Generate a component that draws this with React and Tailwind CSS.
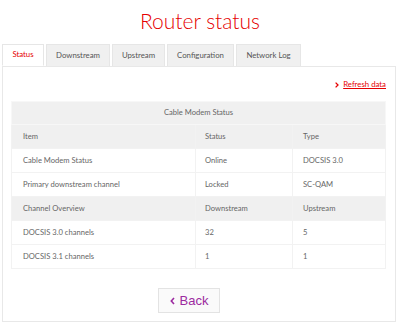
export default function App() {
  const tabs = ['Status', 'Downstream', 'Upstream', 'Configuration', 'Network Log'];
  const tabW = ['w-[42px]', 'w-[64px]', 'w-[53px]', 'w-[67px]', 'w-[65px]'];
  const rows = [
    { cells: ['Item', 'Status', 'Type'], head: true },
    { cells: ['Cable Modem Status', 'Online', 'DOCSIS 3.0'] },
    { cells: ['Primary downstream channel', 'Locked', 'SC-QAM'] },
    { cells: ['Channel Overview', 'Downstream', 'Upstream'], head: true },
    { cells: ['DOCSIS 3.0 channels', '32', '5'] },
    { cells: ['DOCSIS 3.1 channels', '1', '1'] },
  ];
  return (
    <div className="w-[400px] h-[331px] bg-white font-['Lato',sans-serif] text-[#333]">
      <h1 className="pt-[8px] h-[44px] text-center text-[21px] leading-[26px] font-light text-[#e60000]">
        Router status
      </h1>
      <div className="flex gap-[2px] pl-[2px]">
        {tabs.map((t, i) => (
          <div
            key={t}
            className={`${tabW[i]} h-[22px] flex items-center justify-center text-[7.8px] border border-[#e6e6e6] ${
              i === 0 ? 'bg-white text-[#e60000] border-b-white -mb-px z-10' : 'bg-[#f0f0f0] text-[#555] border-b-0'
            }`}
          >
            {t}
          </div>
        ))}
      </div>
      <div className="mx-[2px] w-[394px] h-[256px] border border-[#e8e8e8] px-[8px]">
        <div className="h-[34px] flex items-center justify-end pr-[1px] pt-[2px]">
          <a className="flex items-center gap-[4px] text-[7.8px] text-[#e60000] underline">
            <svg width="4" height="6" viewBox="0 0 4 6">
              <path d="M0.6 0.6 L3 3 L0.6 5.4" stroke="#e60000" strokeWidth="1.3" fill="none" />
            </svg>
            Refresh data
          </a>
        </div>
        <table className="w-[375px] border-collapse text-[7.6px] text-[#666]">
          <tbody>
            <tr className="bg-[#f0f0f0]">
              <td colSpan={3} className="h-[23px] text-center border border-[#f7f7f7]">
                Cable Modem Status
              </td>
            </tr>
            {rows.map((r, i) => (
              <tr key={i} className={r.head ? 'bg-[#f0f0f0]' : 'bg-white'}>
                <td className="w-[184px] h-[24px] pl-[11px] border border-[#f2f2f2]">{r.cells[0]}</td>
                <td className="w-[97px] pl-[9px] border border-[#f2f2f2]">{r.cells[1]}</td>
                <td className="pl-[10px] border border-[#f2f2f2]">{r.cells[2]}</td>
              </tr>
            ))}
          </tbody>
        </table>
        <div className="flex pt-[19px] pl-[147px]">
          <button className="w-[62px] h-[25px] flex items-center justify-center gap-[5px] bg-[#fafafa] border border-[#e3e3e3] text-[13px] text-[#9c2aa0] font-['Liberation_Sans',sans-serif]">
            <svg width="5" height="8" viewBox="0 0 5 8">
              <path d="M4 1 L1.3 4 L4 7" stroke="#9c2aa0" strokeWidth="1.6" fill="none" />
            </svg>
            Back
          </button>
        </div>
      </div>
    </div>
  );
}
